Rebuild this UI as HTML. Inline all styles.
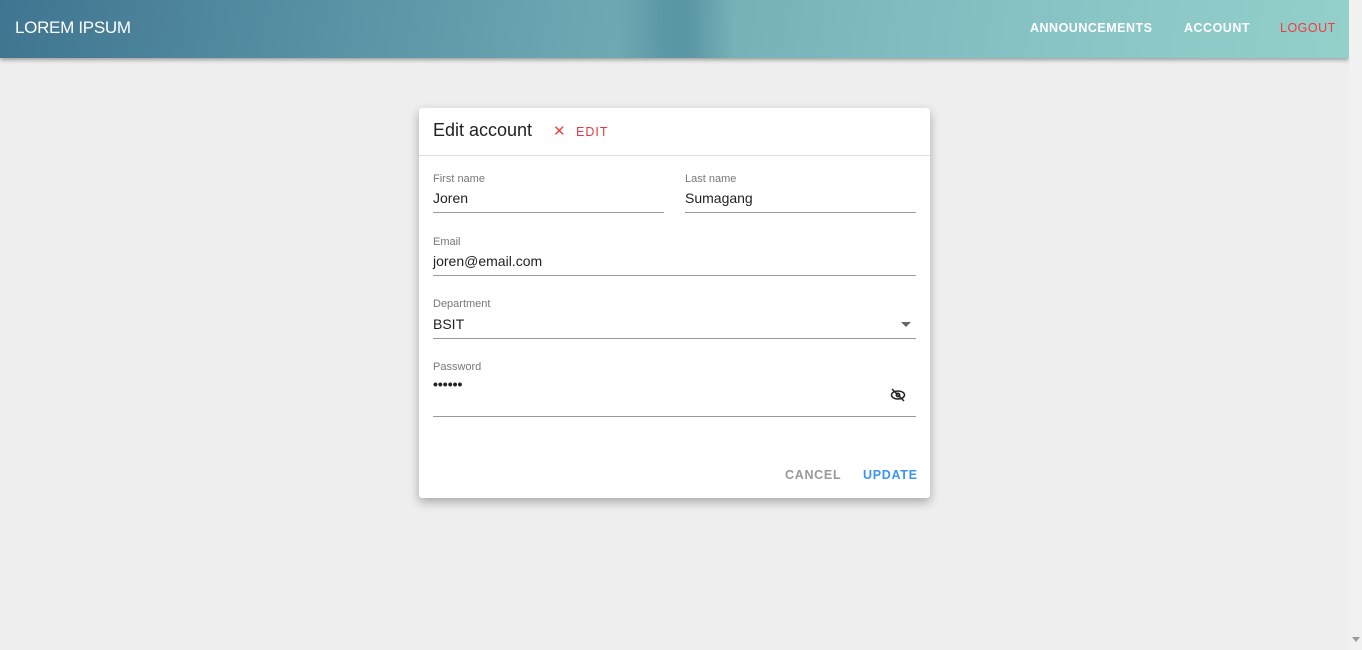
<!DOCTYPE html>
<html><head><style>
*{box-sizing:border-box;margin:0;padding:0}
body{width:1362px;height:650px;background:#eeeeee;font-family:"Liberation Sans",sans-serif;position:relative;overflow:hidden}
.hdr{position:absolute;left:0;top:0;width:1349px;height:58px;background:linear-gradient(100deg,#3f7590 0%,#5e98a8 30%,#73aeb6 50%,#86c2c4 75%,#93d0ca 100%);box-shadow:0 2px 4px rgba(0,0,0,.35)}
.tower{position:absolute;left:615px;top:0;width:120px;height:58px;background:linear-gradient(90deg,rgba(60,120,140,0),rgba(60,120,140,.45) 45%,rgba(60,120,140,.45) 60%,rgba(60,120,140,0))}
.logo{position:absolute;left:15px;top:18px;color:#fff;font-size:17px;letter-spacing:-.3px}
.nav{position:absolute;top:21px;color:#fff;font-size:12.5px;font-weight:bold;letter-spacing:.5px}
.sb{position:absolute;right:0;top:0;width:13px;height:650px;background:#f1f1f1}
.card{position:absolute;left:419px;top:108px;width:511px;height:390px;background:#fff;border-radius:3px;box-shadow:0 4px 10px rgba(0,0,0,.3)}
.title{position:absolute;left:14px;top:12px;font-size:18px;color:#222}
.x{position:absolute;left:134px;top:14px;color:#ef4444;font-size:15px}
.edit{position:absolute;left:157px;top:17px;color:#e53945;font-size:12.5px;letter-spacing:1px}
.div{position:absolute;left:0;top:47px;width:511px;height:1px;background:#e0e0e0}
.lbl{position:absolute;font-size:11px;color:#777}
.val{position:absolute;font-size:14px;color:#222}
.line{position:absolute;height:1px;background:#999}
.btn{position:absolute;top:360px;font-size:12.5px;font-weight:bold;letter-spacing:.7px}
</style></head><body>
<div class="hdr"><div class="tower"></div>
<div class="logo">LOREM IPSUM</div>
<div class="nav" style="left:1030px">ANNOUNCEMENTS</div>
<div class="nav" style="left:1184px">ACCOUNT</div>
<div class="nav" style="left:1280px;color:#f03c3c;font-weight:normal">LOGOUT</div>
</div>
<div class="sb"><div style="margin:637px 0 0 3px;width:0;height:0;border-left:4px solid transparent;border-right:4px solid transparent;border-top:5px solid #999"></div></div>
<div class="card">
<div class="title">Edit account</div><div class="x">✕</div><div class="edit">EDIT</div>
<div class="div"></div>
<div class="lbl" style="left:14px;top:65px">First name</div>
<div class="val" style="left:14px;top:82px">Joren</div>
<div class="line" style="left:14px;top:104px;width:231px"></div>
<div class="lbl" style="left:266px;top:65px">Last name</div>
<div class="val" style="left:266px;top:82px">Sumagang</div>
<div class="line" style="left:266px;top:104px;width:231px"></div>
<div class="lbl" style="left:14px;top:128px">Email</div>
<div class="val" style="left:14px;top:145px">joren@email.com</div>
<div class="line" style="left:14px;top:167px;width:483px"></div>
<div class="lbl" style="left:14px;top:190px">Department</div>
<div class="val" style="left:14px;top:208px">BSIT</div>
<div style="position:absolute;left:482px;top:214px;border-left:5px solid transparent;border-right:5px solid transparent;border-top:5px solid #666"></div>
<div class="line" style="left:14px;top:230px;width:483px"></div>
<div class="lbl" style="left:14px;top:253px">Password</div>
<div class="val" style="left:14px;top:268px;font-weight:bold">••••••</div>
<svg style="position:absolute;left:471px;top:280px" width="16" height="14" viewBox="0 0 16 14"><ellipse cx="8" cy="7" rx="6.5" ry="4" fill="none" stroke="#222" stroke-width="1.5"/><circle cx="8" cy="7" r="1.8" fill="none" stroke="#222" stroke-width="1.3"/><line x1="2" y1="1" x2="14" y2="13" stroke="#222" stroke-width="1.5"/></svg>
<div class="line" style="left:14px;top:308px;width:483px"></div>
<div class="btn" style="left:366px;color:#999">CANCEL</div>
<div class="btn" style="left:444px;color:#3b95f0">UPDATE</div>
</div>
</body></html>
